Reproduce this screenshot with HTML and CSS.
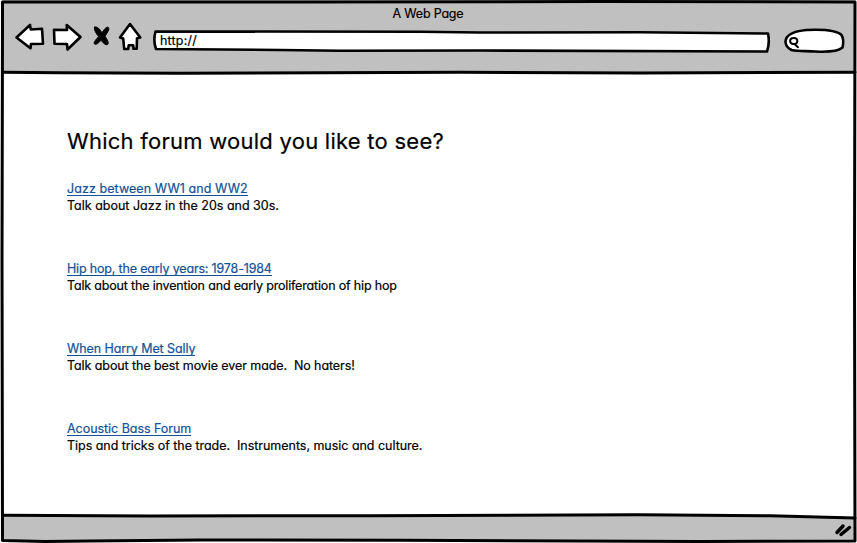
FILE: index.html
```html
<!DOCTYPE html>
<html lang="en">
<head>
<meta charset="utf-8">
<title>A Web Page</title>
<link rel="stylesheet" href="styles.css">
</head>
<body>
<div class="window">
  <header class="chrome">
    <div class="title">A Web Page</div>
    <div class="toolbar">
      <svg class="nav" width="132" height="34" viewBox="12 20 132 34">
        <path d="M16.500 37.500L30 25l.8 4.500 11.200-.8 1 15-12 .3-.5 4.300z"/>
        <path d="M54 29.800l13 .2-.3-5L80.500 37 67.500 49.500l-.5-5.500-12.500-.3z"/>
        <path class="cross" d="M94.500 27.200c3-1.200 5 2 7.500 5.500 2-3 4-6 6-5.500 2.500 1-1 6-3 9 2 3 4.500 7 2.500 8.300-2.500 1-4.500-2-6.500-4.300-2 2.500-5 5-6.500 3.800-1.500-1.500 2-5 4-7.500-2.500-3-5-7.500-4-9.300z"/>
        <path d="M130 24l10.300 13.500-3.300.8-.3 10.500h-3.200l-.3-3.500h-4.500l-.5 3.700h-4l-1-10.500-3.200-1z"/>
      </svg>
      <div class="address">
        <svg class="shape" viewBox="150 28 624 28"><path d="M155.500 31.500L420 31.700 480 32.500l160-.3L768 33.500q2 9-1 18L480 50.500 340 50.700l-60-.7-124-1q-3-8-.5-17.500z"/></svg>
        <span class="url">http://</span>
      </div>
      <svg class="search" width="64" height="30" viewBox="782 26 64 30">
        <path d="M785.500 41.500c.5-8 10-10.500 21-11.500 14-.6 30-.2 35 5 2.500 4 2 8 1 12.500-5 4.500-17 4.500-27 4-10-.6-18 0-24-1.500-4-2-6-5-6-8.500z"/>
        <path class="lens" d="M793.500 38c3-.2 4 1.500 3.800 3.500-.2 1.800-1.800 2.700-3.800 2.500-2.300-.1-3.500-1.500-3.400-3.200.1-1.700 1.400-2.800 3.400-2.800zM795 44.500l3 2.700"/>
      </svg>
    </div>
  </header>
  <main>
    <h1>Which forum would you like to see?</h1>
    <section><a class="l1">Jazz between WW1 and WW2</a><p class="p1">Talk about Jazz in the 20s and 30s.</p></section>
    <section><a class="l2">Hip hop, the early years: 1978-1984</a><p class="p2">Talk about the invention and early proliferation of hip hop</p></section>
    <section><a class="l3">When Harry Met Sally</a><p class="p3">Talk about the best movie ever made.&nbsp; No haters!</p></section>
    <section><a class="l4">Acoustic Bass Forum</a><p class="p4">Tips and tricks of the trade.&nbsp; Instruments, music and culture.</p></section>
  </main>
  <footer></footer>
  <svg class="frame" width="857" height="543" viewBox="0 0 857 543">
    <path class="fill" d="M3 515h400l230-1.300L768 515.500 855 518v23H3z"/>
    <path d="M2.500 2L300 2 600 1.500 855 2 854.500 270l.5 271L700 541.500 400 540.300l-200-.3-110 1-45 .5L2.500 540.500 2 260 2.500 25z"/>
    <path d="M3 72.300L60 72.700l120 .6 280-1 180 .7 215-.8M3 515.300L150 516l220-.3L640 514.800l130 .9 85 2.300"/>
    <path class="grip" d="M837 532.500l6-6.500M841 534.500l8.500-7"/>
  </svg>
</div>
</body>
</html>
```
FILE: styles.css
```css
* { box-sizing: border-box; }
body { margin: 0; background: #fff; color: #000; font-family: Inter, Lato, sans-serif; font-size: 12.5px; font-feature-settings: "cv11"; -webkit-text-stroke: .2px currentColor; }
.window { position: relative; width: 857px; height: 543px; display: flex; flex-direction: column; overflow: hidden; }
.chrome { height: 73px; margin: 0 2px; background: #c0c0c0; }
.title { height: 20px; padding: 6px 1px 0 0; line-height: 16px; text-align: center; letter-spacing: -.2px; }
.toolbar { display: flex; padding-left: 10px; }
svg path { fill: #fff; stroke: #000; stroke-width: 2.6; stroke-linejoin: round; stroke-linecap: round; }
svg .cross { stroke-width: 1; fill: #000; }
.address { position: relative; width: 624px; height: 28px; margin: 8px 8px 0 6px; padding: 5px 0 0 10px; line-height: 16px; }
.shape { position: absolute; left: 0; top: 0; width: 624px; height: 28px; }
.url { position: relative; letter-spacing: .2px; }
.search { margin-top: 6px; }
svg .lens { stroke-width: 2; }
main { flex: 1; padding: 55px 67px 0; }
h1 { margin: 0 0 25px; font-size: 22px; line-height: 27px; font-weight: 400; letter-spacing: .25px; white-space: nowrap; }
section { height: 80px; padding-top: 1px; line-height: 17px; white-space: nowrap; }
section a { display: block; width: max-content; height: 15px; margin-bottom: 1px; line-height: 15px; border-bottom: 1px solid #12519a; color: #12519a; }
section p { margin: 0; }
.l1 { letter-spacing: .07px; }
.l2 { letter-spacing: -.17px; }
.p2 { letter-spacing: -.17px; }
.l3 { letter-spacing: -.09px; }
.p3 { letter-spacing: -.08px; }
.l4 { letter-spacing: -.04px; }
.p4 { letter-spacing: -.03px; }
footer { height: 28px; }
.frame { position: absolute; inset: 0; pointer-events: none; }
.frame path { fill: none; stroke-width: 3; }
.frame .fill { fill: #c0c0c0; stroke: none; }
.frame .grip { stroke-width: 3.5; }
```
